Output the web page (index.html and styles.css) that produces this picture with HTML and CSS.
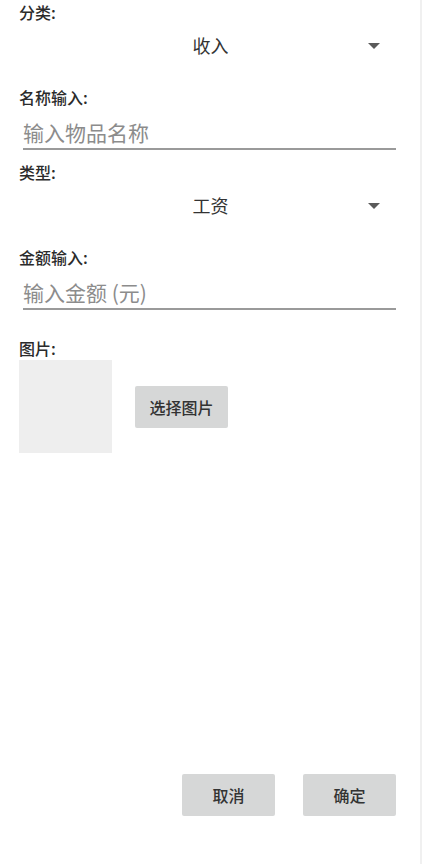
FILE: index.html
```html
<!DOCTYPE html>
<html lang="zh-CN">
  <head>
    <meta charset="UTF-8" />
    <meta name="viewport" content="width=device-width, initial-scale=1.0" />
    <title>添加记录</title>
    <link rel="stylesheet" href="styles.css">
  </head>
  <body>
    <div class="page">
      <label class="field-label">分类:</label>
      <div class="spinner">
        <span class="spinner-text">收入</span>
        <span class="spinner-arrow"></span>
      </div>

      <label class="field-label gap-top" for="name">名称输入:</label>
      <input class="text-input" type="text" id="name" placeholder="输入物品名称">

      <label class="field-label gap-small">类型:</label>
      <div class="spinner">
        <span class="spinner-text">工资</span>
        <span class="spinner-arrow"></span>
      </div>

      <label class="field-label gap-top" for="amount">金额输入:</label>
      <input class="text-input" type="text" id="amount" placeholder="输入金额 (元)">

      <label class="field-label gap-pic">图片:</label>
      <div class="pic-row">
        <div class="pic-box"></div>
        <button class="btn">选择图片</button>
      </div>

      <div class="actions">
        <button class="btn">取消</button>
        <button class="btn">确定</button>
      </div>
    </div>
  </body>
</html>
```

FILE: styles.css
```css
*{
    margin: 0;
    padding: 0;
    box-sizing: border-box;
}
body{
    background: #ffffff;
    font-family: "Noto Sans CJK SC", "Noto Sans", sans-serif;
    color: #2e2e2e;
}
.page{
    width: 422px;
    height: 864px;
    border-right: 2px solid #f0f0f0;
    padding: 0 24px 48px 19px;
    display: flex;
    flex-direction: column;
}
.field-label{
    display: block;
    font-size: 16px;
    font-weight: 500;
    line-height: 24px;
    height: 24px;
    color: #2b2b2b;
}
.gap-top{
    margin-top: 19px;
}
.gap-small{
    margin-top: 10px;
}
.gap-pic{
    margin-top: 26px;
}
.spinner{
    height: 42px;
    display: flex;
    align-items: center;
    justify-content: center;
    position: relative;
    padding-left: 6px;
}
.spinner-text{
    font-size: 18px;
    color: #333333;
}
.spinner-arrow{
    position: absolute;
    right: 16px;
    top: 19px;
    width: 0;
    height: 0;
    border-left: 6px solid transparent;
    border-right: 6px solid transparent;
    border-top: 6px solid #5a5a5a;
}
.text-input{
    display: block;
    margin-left: 4px;
    height: 41px;
    padding-top: 6px;
    border: none;
    border-bottom: 2px solid #9a9a9a;
    outline: none;
    font-family: inherit;
    font-size: 21px;
    line-height: 28px;
    color: #333333;
    background: transparent;
}
.text-input::placeholder{
    color: #8c8c8c;
}
.pic-row{
    display: flex;
    align-items: center;
    gap: 23px;
}
.pic-box{
    width: 93px;
    height: 93px;
    background-color: #eeeeee;
}
.btn{
    width: 93px;
    height: 42px;
    border: none;
    border-radius: 2px;
    background-color: #d6d7d7;
    color: #333333;
    font-family: inherit;
    font-size: 16px;
    font-weight: 500;
}
.actions{
    margin-top: auto;
    display: flex;
    justify-content: flex-end;
    gap: 28px;
}
```
